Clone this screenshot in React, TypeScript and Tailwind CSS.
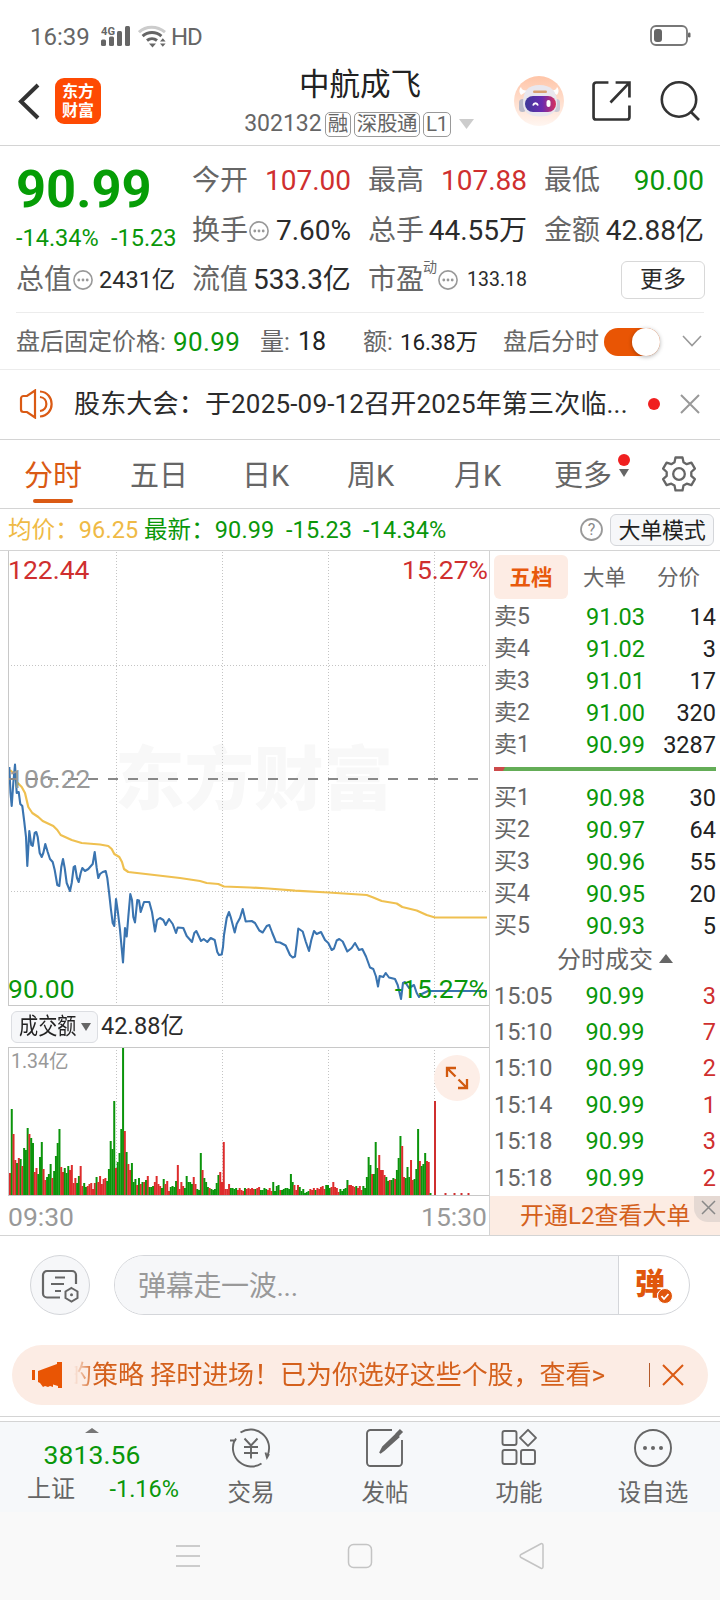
import React from "react";
import clsx from "clsx";

const TOP_QUOTES = [
  { label: "今开", value: "107.00", color: "text-[#cf2f2f]" },
  { label: "最高", value: "107.88", color: "text-[#cf2f2f]" },
  { label: "最低", value: "90.00", color: "text-[#0a970a]" },
  { label: "换手", value: "7.60%", color: "text-[#2b2b2b]", hint: true },
  { label: "总手", value: "44.55万", color: "text-[#2b2b2b]" },
  { label: "金额", value: "42.88亿", color: "text-[#2b2b2b]" },
];

const SELLS = [
  ["卖5", "91.03", "14"],
  ["卖4", "91.02", "3"],
  ["卖3", "91.01", "17"],
  ["卖2", "91.00", "320"],
  ["卖1", "90.99", "3287"],
];

const BUYS = [
  ["买1", "90.98", "30"],
  ["买2", "90.97", "64"],
  ["买3", "90.96", "55"],
  ["买4", "90.95", "20"],
  ["买5", "90.93", "5"],
];

const TRADES = [
  ["15:05", "90.99", "3"],
  ["15:10", "90.99", "7"],
  ["15:10", "90.99", "2"],
  ["15:14", "90.99", "1"],
  ["15:18", "90.99", "3"],
  ["15:18", "90.99", "2"],
];

const PRICE_LINE =
  "9.3,767 10.5,793 11.7,806 13.3,783 15,764.5 16.7,793 18.7,792 20.3,804 22.3,806 24.3,822 26,837 27.3,866 29.3,831 31.3,845 32.7,846 34.7,833 36.3,832 37.7,837 39.7,853 41.7,857 43.3,853 45.3,844 47.7,852 50,859 52.7,862 54.7,870 57.3,885 59.3,886 61.3,867 63,859 64.7,868 66.7,883 70,891 71.7,883 73.7,867 75,866 77,878 78.7,882 80.7,873 82.3,868 85,871 88.3,869 92.7,864 94.7,852 96.7,868 98.3,878 100,874 102.7,872 105.7,871 107.3,878 109,892 111,910 112.7,923 114.3,926 116,899 118,913 120,930 123,962.5 125,928 126.7,936.5 128.3,917 130.3,894 132,900 133.3,917 135,922.5 137.3,900 139,900.5 140.7,912 144,902 149.3,902 152,912 155,931.5 157,920 160,918 163.3,920 165.7,925 169,919 172.7,924 176,933 177.7,927.5 183.3,928 186.7,936 192,942 194.3,933 196.3,931 198.7,936 201,941 203.7,939 207.3,942 210.7,938 214.7,940 217.3,952 219,955 221.7,954.5 223,947 224,935 226.7,918 229,912 230.7,917 234.7,932.5 236.7,924 240,918 242.7,909 245.7,921.5 251.7,921 255,923 259.3,930.5 262.7,932.5 266.7,926 269.3,925 272.3,933 276,942 280,942.5 285.7,945.5 290,955 292.7,957.5 295,956.5 296.7,943 298.3,928.5 302.7,931.5 305.7,941.5 309,951 311.3,940 314,931 316.7,934 321,932 325,940 328.3,943 331.7,950 334,948.5 336.7,940.5 339.3,939 342.7,941.5 347.3,951.5 351.7,948 355,943 359,950 362.3,949 366,956.5 370,967.5 373.3,969 376,976.5 378,986.5 379.7,976 383.3,977 385.7,973 389,977.5 395,979 397.7,985 401,999 403,983 405,982 409,988 414,985 416.7,993 419,997 421.7,994 428,991 487,991";

const AVG_LINE =
  "10,770 13.3,773 16.7,782 21.7,787 25,793 28.3,807 32.3,813 38.3,817 42.7,821 53.3,826 57.3,830 60.7,835 71.7,840 81.7,843 100,844.5 108.3,846 111.7,849 114.3,854 119.3,857 122,862 124,869 128.3,872 150,874.5 180,878 200,881 206.7,883 218.3,884 224,886.5 250,887.5 268.3,888.5 295,890.7 328.3,892.5 366.7,895 373.3,897.5 381.7,901 396.7,903.5 402.3,907 416.7,910.5 426.7,915 435,917.5 487,917.5";

// one entry per minute: bar height + r(ise) / g(reen, fall)
const VOLUME =
  "22r 86g 61r 35r 32g 37r 36g 29r 47g 45g 67g 61r 57g 52g 23r 27r 21g 38g 53g 26r 15r 18g 21g 31g 17r 24g 39g 52g 66g 28r 23r 27g 22g 29g 25r 30r 12r 17r 12g 19g 29r 9r 12g 8g 9r 11r 12r 6r 12r 18g 13r 19r 11r 16r 17r 14g 26g 54g 46g 94g 27r 33g 42g 66g 147g 64r 43g 31r 25r 32g 13g 16g 10r 17g 11r 13g 13r 15g 19r 8g 8g 9g 13r 19r 11r 9r 7g 16g 11r 14r 4r 8g 9g 8g 14g 30r 6r 13r 9r 7g 19g 13g 13g 11g 18r 11r 6g 5g 42g 25r 17g 13g 8g 7r 6g 5g 6g 12g 20g 23r 13r 53r 6r 6r 11r 7g 7g 6g 7g 5r 7r 5r 4r 7g 6r 7r 6r 7r 6r 6g 7r 8r 5g 5g 7g 6g 5r 7r 4r 13g 4g 9g 10g 5r 5g 6g 7g 7g 6g 21g 13g 10r 5r 10r 8g 4g 6g 2g 3g 4g 6r 5r 7r 5g 7r 6r 8r 9r 6r 10g 10g 7g 8r 13r 8r 7r 3r 6g 4g 6g 7g 15g 10r 10r 9r 8r 9g 7r 9r 5r 9g 7g 18g 38g 30g 21r 21g 53g 27g 40r 25r 25r 20r 18g 14g 15r 15g 17g 16r 25g 37g 59g 49r 18r 17g 28g 18g 35r 15r 16g 26g 66g 34r 29g 31g 42g 34r 33r 2g"
    .split(" ")
    .map((s) => ({ h: parseInt(s, 10), up: s.endsWith("r") }));

const GRID_X = [116.5, 222.5, 328.5, 434.5];

const Hint = () => (
  <svg width="20" height="20" viewBox="0 0 20 20" className="ml-px shrink-0">
    <circle cx="10" cy="10" r="9.1" fill="none" stroke="#999" strokeWidth="1.6" />
    <circle cx="5.8" cy="10" r="1.4" fill="#999" />
    <circle cx="10" cy="10" r="1.4" fill="#999" />
    <circle cx="14.2" cy="10" r="1.4" fill="#999" />
  </svg>
);

const StatusBar = () => (
  <div className="flex h-[62px] items-center pt-[11px] pr-[30px] pl-[30px] text-2xl text-[#666]">
    <span className="w-[71px]">16:39</span>
    <svg width="30" height="22" viewBox="0 0 30 22" className="mb-0.5">
      <text x="0" y="9.5" fontSize="11.5" fontWeight="700" textLength="14" lengthAdjust="spacingAndGlyphs" fill="#666">4G</text>
      <g fill="#666">
        <rect x="0" y="14.5" width="5" height="6.5" rx="1.5" />
        <rect x="8" y="11.5" width="5" height="9.5" rx="1.5" />
        <rect x="16" y="6" width="5" height="15" rx="1.5" />
        <rect x="24" y="1" width="5" height="20" rx="1.5" />
      </g>
    </svg>
    <svg width="28" height="23" viewBox="0 0 28 23" className="ml-[7px]" fill="none" strokeWidth="3">
      <path d="M1 7.2C8 .6 19 .6 27 7.2" stroke="#ccc" />
      <path d="M4.600 11.200C10 6.400 18 6.400 23.400 11.200" stroke="#666" />
      <path d="M9 15.500c3-2.500 7-2.500 10 0" stroke="#666" />
      <path d="M11 18.500h7l-3.500 4z" fill="#666" />
      <path d="M22 16.500l2.800-3.200 2.800 3.200zM22 18.500l2.800 3.200 2.800-3.200z" fill="#666" />
    </svg>
    <span className="ml-[5px] tracking-[-1px]">HD</span>
    <svg width="41" height="22" viewBox="0 0 41 22" className="mb-0.5 ml-auto -mr-px">
      <rect x="1" y="1" width="36" height="19" rx="5" fill="none" stroke="#777" strokeWidth="1.8" />
      <rect x="4" y="4" width="8" height="13" rx="3" fill="#666" />
      <rect x="38" y="7.500" width="2.500" height="5" rx="1.2" fill="#666" />
    </svg>
  </div>
);

const Badge = ({ children }: { children: React.ReactNode }) => (
  <span className="h-[25px] rounded-[5px] border-[1.5px] border-[#999] px-[2px] text-[20.5px] leading-[22px] tracking-[-0.4px]">
    {children}
  </span>
);

const Header = () => (
  <header className="flex h-[84px] border-b border-[#d4d4d4]">
    <div className="flex h-[78px] w-[240px] items-center pl-[18px]">
      <svg width="22" height="37" viewBox="0 0 22 37" fill="none" stroke="#333" strokeWidth="4">
        <path d="M20 2L3 18.500 20 35" />
      </svg>
      <div className="ml-[15px] flex size-[46px] flex-col items-center justify-center rounded-[9px] bg-[#fe4a03] text-base leading-[19px] font-bold text-white">
        <span>东方</span>
        <span>财富</span>
      </div>
    </div>
    <div className="flex w-[237px] flex-col items-center pt-px">
      <h1 className="ml-[3px] text-[30.5px] leading-[44px] text-[#222]">中航成飞</h1>
      <div className="ml-px flex h-[34px] items-center gap-[3px] text-[23px] whitespace-nowrap text-[#666]">
        <span>302132</span>
        <Badge>融</Badge>
        <Badge>深股通</Badge>
        <Badge>L1</Badge>
        <svg width="15" height="10" viewBox="0 0 15 10" className="ml-[5px]">
          <path d="M0 0h15L7.500 10z" fill="#ccc" />
        </svg>
      </div>
    </div>
    <div className="flex h-[77px] flex-1 items-center pl-[37px]">
      <svg width="50" height="50" viewBox="0 0 50 50">
        <defs>
          <linearGradient id="halo" x1="0" y1="0" x2="0" y2="1">
            <stop offset="0" stopColor="#ffc5a8" />
            <stop offset="1" stopColor="#fff6f1" />
          </linearGradient>
          <linearGradient id="visor">
            <stop offset="0" stopColor="#3d3a98" />
            <stop offset=".55" stopColor="#6a2bb0" />
            <stop offset="1" stopColor="#d8305c" />
          </linearGradient>
        </defs>
        <circle cx="25" cy="25" r="25" fill="url(#halo)" />
        <path d="M7 19c-3-4-1-7 0-8 1 4 5 4 8 3zM43 19c3-4 1-7 0-8-1 4-5 4-8 3z" fill="#fff" />
        <rect x="5" y="23" width="7" height="13" rx="3.500" fill="#b9bac8" />
        <rect x="39" y="23" width="7" height="13" rx="3.500" fill="#c9cad6" />
        <path d="M9 27C9 15 14 9 25.500 9S43 15 43 27c0 9-6 13.500-17 13.500S9 36 9 27z" fill="#e9e7ee" />
        <rect x="19" y="14.500" width="14" height="2.500" rx="1.200" fill="#d9a070" />
        <rect x="11" y="20" width="31" height="16" rx="8" fill="url(#visor)" />
        <path d="M19 29.500c1-3 4-3 5 0" fill="none" stroke="#fff" strokeWidth="1.800" />
        <rect x="32.500" y="24" width="4" height="7" rx="2" fill="#fff" />
      </svg>
      <svg width="39" height="40" viewBox="0 0 38 39" className="ml-[28px]" fill="none" stroke="#333" strokeWidth="2.600">
        <path d="M16 1.500H4a2.500 2.500 0 0 0-2.500 2.500v31A2.500 2.500 0 0 0 4 37.500h30a2.500 2.500 0 0 0 2.500-2.500V24" />
        <path d="M23 1.500h13.500V16M36 2L18 21" />
      </svg>
      <svg width="40" height="40" viewBox="0 0 40 40" className="ml-[29px]" fill="none" stroke="#333" strokeWidth="2.600">
        <circle cx="19" cy="18.500" r="17.200" />
        <path d="M31 31l8 8" />
      </svg>
    </div>
  </header>
);

const QuotePanel = () => (
  <section className="mx-4 h-[167px] border-b border-[#ececec] pt-[10px] text-[28px] whitespace-nowrap text-[#666]">
    <div className="flex h-[99px]">
      <div className="w-[177px]">
        <div className="-mb-[3px] pt-[2px] text-[52.5px] leading-[62px] font-bold text-[#069d06]">90.99</div>
        <div className="flex h-[43px] items-center text-[23.5px] text-[#0a970a]">
          <span className="w-[95px]">-14.34%</span>
          <span>-15.23</span>
        </div>
      </div>
      <div className="grid flex-1 grid-cols-[158px_158px_159px] gap-x-[18px]">
        {TOP_QUOTES.map((q) => (
          <div key={q.label} className="flex h-[50px] items-center leading-[50px]">
            <span className="-ml-px">{q.label}</span>
            {q.hint && <Hint />}
            <span className={clsx("ml-auto", q.color)}>{q.value}</span>
          </div>
        ))}
      </div>
    </div>
    <div className="flex h-[50px] items-center leading-[50px]">
      <span>总值</span>
      <Hint />
      <span className="ml-[6px] w-[93px] text-[23.5px] text-[#2b2b2b]">2431亿</span>
      <span className="w-[61px]">流值</span>
      <span className="w-[115px] tracking-[-0.1px] text-[#2b2b2b]">533.3亿</span>
      <span>市盈</span>
      <span className="-mt-[27px] -ml-px text-sm">动</span>
      <Hint />
      <span className="ml-[9px] text-[19.5px] text-[#2b2b2b]">133.18</span>
      <button className="ml-auto -mr-px flex h-[38px] w-[84px] items-center justify-center rounded-md border-[1.5px] border-[#d8d8d8] text-[23px] text-[#2b2b2b]">
        更多
      </button>
    </div>
  </section>
);

const AfterHours = () => (
  <section className="flex h-[57px] items-center border-b border-[#ececec] pt-[2px] pl-4 text-2xl whitespace-nowrap text-[#666]">
    <span className="w-[157px]">盘后固定价格:</span>
    <span className="w-[87px] text-[26px] tracking-[0.4px] text-[#0a970a]">90.99</span>
    <span className="w-[38px]">量:</span>
    <span className="w-[65px] text-[25px] text-[#222]">18</span>
    <span className="w-[37px]">额:</span>
    <span className="w-[103px] text-[22.5px] tracking-[-0.2px] text-[#222]">16.38万</span>
    <span className="w-[101px]">盘后分时</span>
    <div className="flex h-[28px] w-[56px] justify-end rounded-full bg-[#e95504]">
      <div className="size-[28px] rounded-full bg-white shadow-[0_1px_4px_rgba(0,0,0,0.3)]" />
    </div>
    <svg width="20" height="12" viewBox="0 0 20 12" className="mb-[2px] ml-[22px]" fill="none" stroke="#999" strokeWidth="1.600">
      <path d="M1 1l9 9.500L19 1" />
    </svg>
  </section>
);

const NewsBar = () => (
  <section className="flex h-[70px] items-center border-b border-[#d4d4d4] pb-px pl-[19px] whitespace-nowrap">
    <svg width="35" height="30" viewBox="0 0 35 30" fill="none" stroke="#da5a14" strokeWidth="2.200">
      <path d="M16 1.500v27L8 23H4.500A2.500 2.500 0 0 1 2 20.500v-11A2.500 2.500 0 0 1 4.500 7H8z" />
      <path d="M21 8c8.500 1 8.500 13 0 14M21 2.500c15.500 1 15.500 24 0 25" />
    </svg>
    <span className="ml-[20px] w-[575px] text-[26px] tracking-[0.18px] text-[#2b2b2b]">
      股东大会：于2025-09-12召开2025年第三次临...
    </span>
    <span className="-ml-px size-3 rounded-full bg-[#f02020]" />
    <svg width="20" height="20" viewBox="0 0 20 20" className="ml-[20px]" stroke="#999" strokeWidth="2">
      <path d="M1 1l18 18M19 1L1 19" />
    </svg>
  </section>
);

const Tabs = () => (
  <nav className="flex h-[69px] items-center border-b border-[#d4d4d4] pl-6 text-[29px] whitespace-nowrap text-[#666]">
    <div className="relative w-[106px] pt-[5px] text-[#da5a14]">
      分时
      <span className="absolute -bottom-[5px] left-[9px] h-1 w-10 rounded-full bg-[#da5a14]" />
    </div>
    <span className="w-[112px] pt-[5px]">五日</span>
    <span className="w-[105px] pt-[5px]">日K</span>
    <span className="w-[107px] pt-[5px]">周K</span>
    <span className="w-[100px] pt-[5px]">月K</span>
    <span className="pt-[5px]">更多</span>
    <div className="mb-[17px] ml-[6px] flex flex-col items-center gap-[3px]">
      <span className="size-3 rounded-full bg-[#f02020]" />
      <svg width="10" height="8" viewBox="0 0 10 8">
        <path d="M0 0h10L5 8z" fill="#666" />
      </svg>
    </div>
    <svg width="36" height="36" viewBox="0 0 36 36" className="ml-[31px]" fill="none" stroke="#666" strokeWidth="2.300" strokeLinejoin="round">
      <path d="M14.500 1.500h7l1 4.800 3.200 1.900 4.700-1.500 3.500 6-3.600 3.300v3.900l3.600 3.300-3.500 6-4.700-1.500-3.200 1.900-1 4.800h-7l-1-4.800-3.200-1.900-4.700 1.500-3.500-6L5.700 19.900V16L2.100 12.700l3.500-6 4.700 1.500 3.200-1.900z" />
      <circle cx="18" cy="18" r="5.800" />
    </svg>
  </nav>
);

const ChartInfo = () => (
  <div className="flex h-[42px] items-center border-b border-[#d4d4d4] pt-[2px] pl-2 text-[23.5px] tracking-[0.1px] whitespace-nowrap text-[#0a970a]">
    <span className="w-[136px] text-[#efba45]">均价：96.25</span>
    <span className="w-[142px]">最新：90.99</span>
    <span className="w-[77px]">-15.23</span>
    <span>-14.34%</span>
    <svg width="23" height="23" viewBox="0 0 23 23" className="mb-[2px] ml-auto">
      <circle cx="11.500" cy="11.500" r="10.500" fill="none" stroke="#999" strokeWidth="1.800" />
      <text x="11.500" y="17" fontSize="16" textAnchor="middle" fill="#888">?</text>
    </svg>
    <button className="mr-[6px] mb-px ml-[7px] h-8 w-[104px] rounded-md border-[1.5px] border-[#d4d6da] bg-[#f6f7f9] text-[22px] leading-[31px] tracking-[-0.2px] text-[#222]">
      大单模式
    </button>
  </div>
);

const PriceChart = () => (
  <div className="h-[455px] w-[481px] border-b border-l border-[#c8c8c8]">
    <svg width="480" height="454" viewBox="9 551 480 454">
      <text x="115" y="804" fontSize="69.500" fontWeight="900" fill="#f8f8f8">东方财富</text>
      <g stroke="#c4c4c4" strokeDasharray="1 2">
        {GRID_X.map((x) => (
          <line key={x} x1={x} y1="552" x2={x} y2="1004" />
        ))}
        <line x1="11" y1="665.500" x2="488" y2="665.500" />
        <line x1="11" y1="891.500" x2="488" y2="891.500" />
      </g>
      <polyline points={AVG_LINE} fill="none" stroke="#efc050" strokeWidth="2.200" strokeLinejoin="round" />
      <polyline points={PRICE_LINE} fill="none" stroke="#3a74b0" strokeWidth="2.100" strokeLinejoin="round" />
      <line x1="8" y1="779" x2="482" y2="779" stroke="#888" strokeWidth="2" strokeDasharray="10 10" />
      <g fontSize="26.500">
        <text x="8" y="579" fill="#cf2f2f">122.44</text>
        <text x="488" y="579" textAnchor="end" fill="#cf2f2f">15.27%</text>
        <text x="9" y="788" fill="#999">106.22</text>
        <text x="8" y="998" fill="#0a970a">90.00</text>
        <text x="488" y="998" textAnchor="end" fill="#0a970a">-15.27%</text>
      </g>
    </svg>
  </div>
);

const VolumeChart = () => (
  <div className="relative h-[149px] w-[481px] border-y border-l border-[#c8c8c8]">
    <svg width="480" height="147" viewBox="9 1048 480 147">
      <g stroke="#c4c4c4" strokeDasharray="1 2">
        {GRID_X.map((x) => (
          <line key={x} x1={x} y1="1050" x2={x} y2="1195" />
        ))}
      </g>
      {VOLUME.map((v, i) => (
        <rect
          key={i}
          x={9 + i * 1.7667}
          y={1195 - v.h}
          width="2"
          height={v.h}
          fill={v.up ? "#dd2c2c" : "#0b940b"}
        />
      ))}
      <rect x="434" y="1101" width="2" height="94" fill="#cf2f2f" />
      {[444.5, 453.5, 460.5, 467.5].map((x) => (
        <rect key={x} x={x} y="1193" width="2" height="2" fill="#cf2f2f" />
      ))}
    </svg>
    <span className="absolute top-0 left-[2px] text-[19.5px] leading-[28px] text-[#999]">1.34亿</span>
    <div className="absolute top-[7px] right-[9px] flex size-[46px] items-center justify-center rounded-full bg-[#fdeee7]">
      <svg width="24" height="24" viewBox="0 0 24 24" fill="none" stroke="#d2590f" strokeWidth="2.300">
        <path d="M2 11V2h9M2.500 2.500l8 8M22 13v9h-9M21.500 21.500l-8-8" />
      </svg>
    </div>
  </div>
);

const Charts = () => (
  <div className="w-[490px] border-r border-[#d4d4d4] pl-2">
    <PriceChart />
    <div className="flex h-[41px] items-center pl-[3px] whitespace-nowrap text-[#2b2b2b]">
      <button className="flex h-8 w-[87px] items-center rounded-md border-[1.5px] border-[#dcdee2] bg-[#f6f7f9] pl-[7px] text-[22.5px]">
        <span className="w-[57px] origin-left scale-x-[0.85] text-[#222]">成交额</span>
        <svg width="10" height="8" viewBox="0 0 10 8" className="ml-[5px] shrink-0">
          <path d="M0 0h10L5 8z" fill="#666" />
        </svg>
      </button>
      <span className="ml-[3px] text-[23.5px] tracking-[0.1px]">42.88亿</span>
    </div>
    <VolumeChart />
    <div className="flex h-[39px] items-center justify-between pt-[2px] pr-[2px] text-[26.500px] text-[#999]">
      <span>09:30</span>
      <span>15:30</span>
    </div>
  </div>
);

const OrderRows = ({ rows }: { rows: string[][] }) => (
  <>
    {rows.map(([label, price, count]) => (
      <div key={label} className="flex h-8 items-center text-[23.5px] leading-8">
        <span className="w-[92px] text-[23px] text-[#666]">{label}</span>
        <span className="text-[#0a970a]">{price}</span>
        <span className="ml-auto text-[#222]">{count}</span>
      </div>
    ))}
  </>
);

const OrderBook = () => (
  <div className="flex w-[230px] flex-col whitespace-nowrap">
    <div className="flex h-[52px] items-start pt-1 pl-1 text-[21.5px] leading-[46px] text-[#666]">
      <span className="h-11 w-[74px] rounded-md bg-[#fdece4] text-center font-bold text-[#e8590c]">
        五档
      </span>
      <span className="ml-[15px]">大单</span>
      <span className="ml-[31px]">分价</span>
    </div>
    <div className="px-1">
      <OrderRows rows={SELLS} />
      <div className="mt-[6px] mb-[11px] flex h-1 bg-[#64ad57]">
        <svg width="11" height="4" viewBox="0 0 11 4">
          <path d="M0 0h11L9 4H0z" fill="#cc4a4a" />
        </svg>
      </div>
      <OrderRows rows={BUYS} />
      <div className="flex h-[36px] items-center pl-[63px] text-2xl text-[#666]">
        分时成交
        <svg width="14" height="9" viewBox="0 0 14 9" className="mb-1 ml-[6px]">
          <path d="M0 9h14L7 0z" fill="#666" />
        </svg>
      </div>
      {TRADES.map(([time, price, count], i) => (
        <div key={i} className="flex h-[36.4px] items-center text-[23.5px]">
          <span className="w-[91.5px] text-[#666]">{time}</span>
          <span className="text-[#0a970a]">{price}</span>
          <span className="ml-auto text-[#cf2f2f]">{count}</span>
        </div>
      ))}
    </div>
    <div className="relative mt-auto h-[39px] bg-[#fcece3] pl-[30px] text-2xl leading-[40px] text-[#d4601c]">
      开通L2查看大单
      <div className="absolute top-0 right-0 flex h-[26px] w-[26px] items-center justify-center rounded-bl-[14px] bg-[#e5d9d3] pb-[4px] pl-[3px]">
        <svg width="15" height="15" viewBox="0 0 15 15" stroke="#888" strokeWidth="1.500">
          <path d="M1 1l13 13M14 1L1 14" />
        </svg>
      </div>
    </div>
  </div>
);

const CommentBar = () => (
  <section className="flex h-[110px] items-start border-t border-[#d4d4d4] pt-[19px] pl-[30px]">
    <div className="flex size-[60px] items-center justify-center rounded-full border border-[#d4d6da] bg-[#f6f7f9]">
      <svg width="38" height="34" viewBox="0 0 38 34" className="-mb-px" fill="none" stroke="#666" strokeWidth="2.200">
        <path d="M19 28.500H6a4 4 0 0 1-4-4V6a4 4 0 0 1 4-4h25a4 4 0 0 1 4 4v9" />
        <path d="M14 8.500h10M10 15h13M14 22h6" />
        <path d="M30.500 19l6 3.500v6.500l-6 3.500-6-3.500v-6.500z" strokeWidth="2" />
        <circle cx="30.500" cy="25.700" r="1.500" fill="#666" stroke="none" />
      </svg>
    </div>
    <div className="ml-6 flex h-[60px] w-[576px] overflow-hidden rounded-full border border-[#d4d6da]">
      <div className="flex w-[504px] items-center border-r border-[#d4d6da] bg-[#f6f7f9] pt-[3px] pl-[23px] text-[28px] tracking-[-0.3px] text-[#999]">
        弹幕走一波...
      </div>
      <div className="relative flex-1">
        <span className="absolute top-[9px] left-[16px] text-[30px] leading-[38px] font-black text-[#e0560c]">弹</span>
        <svg width="16" height="16" viewBox="0 0 16 16" className="absolute top-[32px] left-[38px]">
          <circle cx="8" cy="8" r="7.500" fill="#e0560c" stroke="#fff" />
          <path d="M4.500 8l2.500 3 4.500-5" fill="none" stroke="#fff" strokeWidth="1.800" />
        </svg>
      </div>
    </div>
  </section>
);

const PromoBanner = () => (
  <section className="mx-3 flex h-[60px] items-center rounded-full bg-[#fcece4] pl-[19px] text-[26px] whitespace-nowrap text-[#d4601c]">
    <svg width="32" height="28" viewBox="0 0 32 28" fill="#e95504">
      <path d="M1 9h3v10H1zM7 10L26 3V1h5v26h-4v-2l-5-1.500V26l-3-1-2 1-3-1-2 1-3-4-2-1z" />
    </svg>
    <div className="ml-[3px] w-[567px] [mask-image:linear-gradient(to_right,transparent_8px,black_28px)] tracking-[-0.05px]">
      的策略 择时进场！已为你选好这些个股，查看&gt;
    </div>
    <span className="ml-[16px] h-6 w-px bg-[#b45a2a]" />
    <svg width="22" height="22" viewBox="0 0 22 22" className="ml-[12px]" stroke="#da5a14" strokeWidth="2">
      <path d="M1 1l20 20M21 1L1 21" />
    </svg>
  </section>
);

const BottomItem = ({ label, children }: { label: string; children: React.ReactNode }) => (
  <div className="flex flex-1 flex-col items-center pt-[6px] text-[23.5px] text-[#666]">
    <svg width="42" height="40" viewBox="0 0 42 40" fill="none" stroke="#666" strokeWidth="1.900">
      {children}
    </svg>
    <span className="mt-[7px] leading-9">{label}</span>
  </div>
);

const BottomTabs = () => (
  <nav className="mt-[4px] flex h-[91px] border-t border-[#d4d4d4] bg-[#f6f8fa]">
    <div className="flex w-[184px] flex-col items-center pt-[6px] text-[#0a970a]">
      <svg width="14" height="5" viewBox="0 0 14 5">
        <path d="M0 5h14L7 0z" fill="#777" />
      </svg>
      <span className="mt-[5px] text-[26.5px] leading-[34px] tracking-[0.1px]">3813.56</span>
      <div className="ml-[22px] flex w-[150px] items-center justify-between text-[23.500px] leading-[34px]">
        <span className="-ml-px text-2xl text-[#666]">上证</span>
        <span className="-mr-px">-1.16%</span>
      </div>
    </div>
    <BottomItem label="交易">
      <path d="M10.500 4.500a18.500 18.500 0 0 1 27 23M39 26l-2 3.500-1.500-5M31.500 35.500a18.500 18.500 0 0 1-27-23M0 12.500h5l1-2" />
      <path d="M14.500 10.500l6.500 7 6.500-7M21 17.500v13M14 19h14M14 25h14" />
    </BottomItem>
    <BottomItem label="发帖">
      <path d="M28 2H6.500A3.500 3.500 0 0 0 3 5.500v29A3.500 3.500 0 0 0 6.500 38h28a3.500 3.500 0 0 0 3.500-3.500V12" />
      <path d="M33 7l4.500-4.500" strokeWidth="4.500" />
      <path d="M16 25l3-6L32 6.500l2.500 2.500L20 22z" fill="#666" />
    </BottomItem>
    <BottomItem label="功能">
      <rect x="4.500" y="3" width="14" height="14" rx="2" />
      <rect x="4.500" y="22" width="14" height="14" rx="2" />
      <rect x="23" y="22" width="14" height="14" rx="2" />
      <path d="M30 1.800l8 8-8 8-8-8z" strokeLinejoin="round" />
    </BottomItem>
    <BottomItem label="设自选">
      <circle cx="21" cy="20" r="18" />
      <g fill="#666" stroke="none">
        <circle cx="13" cy="20" r="2" />
        <circle cx="21" cy="20" r="2" />
        <circle cx="29" cy="20" r="2" />
      </g>
    </BottomItem>
  </nav>
);

const SystemNav = () => (
  <div className="flex h-[88px] items-center justify-center gap-[146px] bg-[#f9f9f9]">
    <svg width="26" height="26" viewBox="0 0 26 26" stroke="#ccc" strokeWidth="1.800">
      <path d="M1 3h24M1 13h24M1 23h24" />
    </svg>
    <svg width="26" height="26" viewBox="0 0 26 26" fill="none" stroke="#c4c4c4" strokeWidth="1.500">
      <rect x="1.500" y="1.500" width="23" height="23" rx="5" />
    </svg>
    <svg width="26" height="28" viewBox="0 0 26 28" fill="none" stroke="#c4c4c4" strokeWidth="1.500" strokeLinejoin="round">
      <path d="M24 3v22a1.500 1.500 0 0 1-2.500 1L2 15.500a1.700 1.700 0 0 1 0-3L21.500 2A1.500 1.500 0 0 1 24 3z" />
    </svg>
  </div>
);

export default function App() {
  return (
    <div className="h-[1600px] w-[720px] overflow-hidden bg-white font-['Roboto','Noto_Sans_CJK_SC',sans-serif]">
      <StatusBar />
      <Header />
      <QuotePanel />
      <AfterHours />
      <NewsBar />
      <Tabs />
      <ChartInfo />
      <div className="flex h-[684px]">
        <Charts />
        <OrderBook />
      </div>
      <CommentBar />
      <PromoBanner />
      <div className="mt-[11px] border-b border-[#d4d4d4]" />
      <BottomTabs />
      <SystemNav />
    </div>
  );
}
